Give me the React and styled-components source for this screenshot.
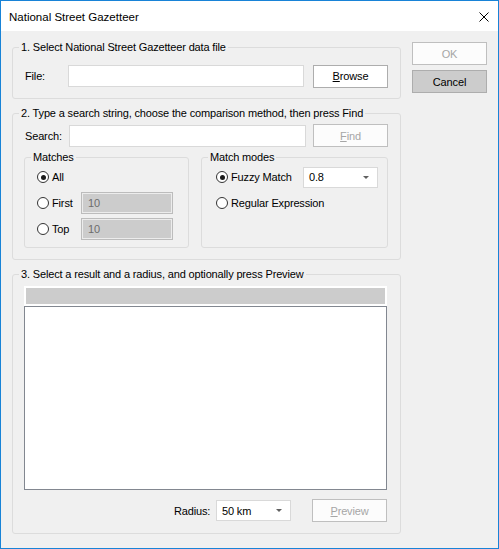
import React from 'react';
import styled, { createGlobalStyle } from 'styled-components';

const GlobalStyle = createGlobalStyle`
  html, body {
    margin: 0;
    padding: 0;
    background: #ffffff;
  }
  * { box-sizing: border-box; }
`;

const Window = styled.div`
  width: 499px;
  height: 549px;
  border: 1px solid #1883d7;
  background: #f0f0f0;
  display: flex;
  flex-direction: column;
  font-family: "Liberation Sans", Arial, sans-serif;
  font-size: 11px;
  letter-spacing: -0.15px;
  color: #000000;
`;

const TitleBar = styled.div`
  height: 30px;
  flex: none;
  background: #ffffff;
  display: flex;
  align-items: center;
  justify-content: space-between;
  padding: 1px 9px 0 8px;
`;

const Title = styled.span`
  font-size: 11.5px;
  letter-spacing: 0;
`;

const CloseBox = styled.span`
  display: flex;
  width: 10px;
  height: 10px;
`;

const Body = styled.div`
  display: flex;
  gap: 11px;
  padding: 9px 10px 0 11px;
`;

const LeftColumn = styled.div`
  width: 389px;
  display: flex;
  flex-direction: column;
`;

const RightColumn = styled.div`
  width: 75px;
  display: flex;
  flex-direction: column;
  gap: 5px;
  padding-top: 2px;
`;

const Group = styled.fieldset`
  margin: ${p => p.$top || 0}px 0 0;
  padding: ${p => p.$pad || '0'};
  border: 1px solid #dcdcdc;
  border-radius: 3px;
  min-width: 0;
  width: ${p => (p.$width ? `${p.$width}px` : 'auto')};
  display: flex;
  flex-direction: column;
`;

/* the legend sits inside the fieldset padding, so $shift pulls it back */
const Legend = styled.legend`
  margin-left: ${p => p.$shift ?? 6}px;
  padding: 0 2px;
  line-height: 15px;
  font-size: 11px;
`;

const Row = styled.div`
  display: flex;
  align-items: center;
  height: ${p => p.$h || 22}px;
  margin-top: ${p => p.$top || 0}px;
  justify-content: ${p => p.$justify || 'flex-start'};
`;

const FieldLabel = styled.span`
  width: ${p => p.$w}px;
  padding-left: 1px;
  flex: none;
`;

const TextBox = styled.div`
  width: ${p => p.$w}px;
  height: 22px;
  margin-right: ${p => p.$gap || 0}px;
  background: #ffffff;
  border: 1px solid #d9d9d9;
  flex: none;
`;

const DisabledBox = styled.div`
  width: 92px;
  height: 22px;
  background: #cccccc;
  border: 1px solid #bcbcbc;
  box-shadow: inset 0 0 0 1px #ececec;
  color: #6d6d6d;
  display: flex;
  align-items: center;
  padding-left: 6px;
`;

const Button = styled.button`
  width: 75px;
  height: 23px;
  flex: none;
  font-family: inherit;
  font-size: 11px;
  letter-spacing: inherit;
  padding: 0;
  border: 1px solid #adadad;
  background: ${p => (p.$grey ? '#cccccc' : '#ffffff')};
  color: #000000;
  &:disabled {
    border-color: #bfbfbf;
    background: #fcfcfc;
    color: #a6a6a6;
  }
  u { text-underline-offset: 1px; }
`;

const SubRow = styled.div`
  display: flex;
  gap: 12px;
  margin-top: 3px;
`;

const SubBody = styled.div`
  display: flex;
  flex-direction: column;
  gap: 4px;
  padding: 1px 0 7px ${p => p.$left}px;
`;

const RadioLabel = styled.label`
  display: flex;
  align-items: center;
  gap: 3px;
  width: ${p => (p.$w ? `${p.$w}px` : 'auto')};
  flex: none;
`;

const RadioCircle = styled.span`
  width: 12px;
  height: 12px;
  border-radius: 50%;
  border: 1px solid #333333;
  background: #ffffff;
  display: flex;
  align-items: center;
  justify-content: center;
  flex: none;
  &::after {
    content: "";
    width: 5px;
    height: 5px;
    border-radius: 50%;
    background: ${p => (p.$checked ? '#1a1a1a' : 'transparent')};
  }
`;

const Combo = styled.div`
  width: 75px;
  height: ${p => p.$h || 21}px;
  background: #ffffff;
  border: 1px solid #d9d9d9;
  display: flex;
  align-items: center;
  justify-content: space-between;
  padding: 0 8px 0 5px;
  margin-right: ${p => p.$gap || 0}px;
  flex: none;
`;

const Caret = styled.span`
  width: 0;
  height: 0;
  border-left: 3.5px solid transparent;
  border-right: 3.5px solid transparent;
  border-top: 3.5px solid #606060;
`;

const ListHeader = styled.div`
  height: 20px;
  background: #cccccc;
  border: 2px solid #ffffff;
`;

const ListBox = styled.div`
  height: 184px;
  background: #ffffff;
  border: 1px solid #828790;
`;

const Radio = ({ checked, w, children }) => (
  <RadioLabel $w={w}>
    <RadioCircle $checked={checked} />
    {children}
  </RadioLabel>
);

export default function App() {
  return (
    <>
      <GlobalStyle />
      <Window>
        <TitleBar>
          <Title>National Street Gazetteer</Title>
          <CloseBox>
            <svg width="10" height="10" viewBox="0 0 10 10">
              <path d="M0.5 0.5 L9.5 9.5 M9.5 0.5 L0.5 9.5" stroke="#000" strokeWidth="1" fill="none" />
            </svg>
          </CloseBox>
        </TitleBar>

        <Body>
          <LeftColumn>
            <Group $pad="9px 12px 10px 11px">
              <Legend $shift={-5}>1. Select National Street Gazetteer data file</Legend>
              <Row $h={24}>
                <FieldLabel $w={44}>File:</FieldLabel>
                <TextBox $w={236} $gap={9} />
                <Button><u>B</u>rowse</Button>
              </Row>
            </Group>

            <Group $top={7} $pad="3px 12px 11px 11px">
              <Legend $shift={-5}>2. Type a search string, choose the comparison method, then press Find</Legend>
              <Row $h={23}>
                <FieldLabel $w={45}>Search:</FieldLabel>
                <TextBox $w={237} $gap={7} />
                <Button disabled><u>F</u>ind</Button>
              </Row>
              <SubRow>
                <Group $width={165}>
                  <Legend>Matches</Legend>
                  <SubBody $left={12}>
                    <Row>
                      <Radio checked>All</Radio>
                    </Row>
                    <Row>
                      <Radio w={44}>First</Radio>
                      <DisabledBox>10</DisabledBox>
                    </Row>
                    <Row>
                      <Radio w={44}>Top</Radio>
                      <DisabledBox>10</DisabledBox>
                    </Row>
                  </SubBody>
                </Group>
                <Group $width={187}>
                  <Legend>Match modes</Legend>
                  <SubBody $left={14}>
                    <Row>
                      <Radio checked w={87}>Fuzzy Match</Radio>
                      <Combo>
                        <span>0.8</span>
                        <Caret />
                      </Combo>
                    </Row>
                    <Row>
                      <Radio>Regular Expression</Radio>
                    </Row>
                  </SubBody>
                </Group>
              </SubRow>
            </Group>

            <Group $top={7} $pad="4px 13px 11px 11px">
              <Legend $shift={-5}>3. Select a result and a radius, and optionally press Preview</Legend>
              <ListHeader />
              <ListBox />
              <Row $h={23} $top={9} $justify="flex-end">
                <FieldLabel $w={43}>Radius:</FieldLabel>
                <Combo $gap={21}>
                  <span>50 km</span>
                  <Caret />
                </Combo>
                <Button disabled><u>P</u>review</Button>
              </Row>
            </Group>
          </LeftColumn>

          <RightColumn>
            <Button disabled>OK</Button>
            <Button $grey>Cancel</Button>
          </RightColumn>
        </Body>
      </Window>
    </>
  );
}
